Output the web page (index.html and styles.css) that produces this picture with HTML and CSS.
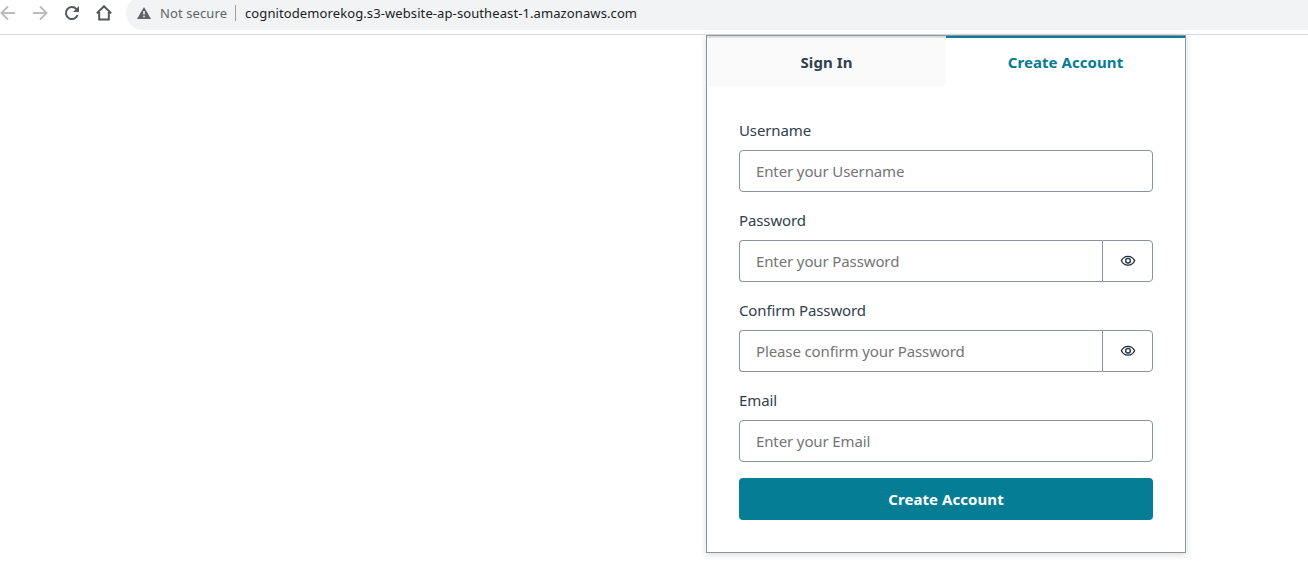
FILE: index.html
```
<!DOCTYPE html>
<html lang="en">
<head>
<meta charset="utf-8">
<title>Create Account</title>
<link rel="stylesheet" href="styles.css">
</head>
<body>
<header class="toolbar">
  <nav class="nav">
    <svg class="icon faded" viewBox="0 0 16 16"><path d="M15 8H2M8 1.5L1.5 8L8 14.5"/></svg>
    <svg class="icon faded" viewBox="0 0 16 16"><path d="M1 8h13M8 1.5L14.5 8L8 14.5"/></svg>
    <svg class="icon" viewBox="0 0 16 16"><path d="M13.6 10A6 6 0 1 1 12.3 3.9L13.5 5"/><path class="solid" d="M15 1v6H9z"/></svg>
    <svg class="icon" viewBox="0 0 16 16"><path d="M0.8 8.4L8 1.2L15.2 8.4M3.2 7V14.6H12.8V7"/></svg>
  </nav>
  <div class="address">
    <svg class="warning" viewBox="0 0 14 12"><path d="M7 0L14 12H0z" fill="#5f6368"/><path d="M6.2 4h1.6v3.6H6.2zM6.2 8.7h1.6v1.6H6.2z" fill="#f1f3f4"/></svg>
    <span class="status">Not secure</span>
    <span class="divider"></span>
    <span class="url">cognitodemorekog.s3-website-ap-southeast-1.amazonaws.com</span>
  </div>
</header>
<main class="card">
  <div class="tabs">
    <button class="tab">Sign In</button>
    <button class="tab active">Create Account</button>
  </div>
  <form class="form">
    <div class="field">
      <label class="label" for="username">Username</label>
      <div class="control"><input class="input" id="username" placeholder="Enter your Username"></div>
    </div>
    <div class="field">
      <label class="label" for="password">Password</label>
      <div class="control">
        <input class="input" id="password" type="password" placeholder="Enter your Password">
        <button class="reveal" type="button" aria-label="Show password"><svg class="eye" viewBox="0 0 24 24"><path d="M12 6a9.77 9.77 0 0 1 8.82 5.5 9.76 9.76 0 0 1-17.64 0A9.77 9.77 0 0 1 12 6m0-2C7 4 2.73 7.11 1 11.5 2.73 15.89 7 19 12 19s9.27-3.11 11-7.5C21.27 7.11 17 4 12 4m0 5a2.5 2.5 0 0 1 0 5 2.5 2.5 0 0 1 0-5m0-2a4.5 4.5 0 1 0 0 9 4.5 4.5 0 0 0 0-9"/></svg></button>
      </div>
    </div>
    <div class="field">
      <label class="label" for="confirm">Confirm Password</label>
      <div class="control">
        <input class="input" id="confirm" type="password" placeholder="Please confirm your Password">
        <button class="reveal" type="button" aria-label="Show password"><svg class="eye" viewBox="0 0 24 24"><path d="M12 6a9.77 9.77 0 0 1 8.82 5.5 9.76 9.76 0 0 1-17.64 0A9.77 9.77 0 0 1 12 6m0-2C7 4 2.73 7.11 1 11.5 2.73 15.89 7 19 12 19s9.27-3.11 11-7.5C21.27 7.11 17 4 12 4m0 5a2.5 2.5 0 0 1 0 5 2.5 2.5 0 0 1 0-5m0-2a4.5 4.5 0 1 0 0 9 4.5 4.5 0 0 0 0-9"/></svg></button>
      </div>
    </div>
    <div class="field">
      <label class="label" for="email">Email</label>
      <div class="control"><input class="input" id="email" type="email" placeholder="Enter your Email"></div>
    </div>
    <button class="submit" type="button">Create Account</button>
  </form>
</main>
</body>
</html>
```
FILE: styles.css
```
* { box-sizing: border-box; }
body {
  margin: 0;
  height: 571px;
  overflow: hidden;
  background: #fff;
  color: #304050;
  font-family: "Noto Sans", "Open Sans", sans-serif;
  font-size: 15px;
  letter-spacing: -0.12px;
}
button, input { font: inherit; letter-spacing: inherit; margin: 0; }
.toolbar {
  display: flex;
  align-items: flex-start;
  height: 35px;
  border-bottom: 1px solid #dadce0;
}
.nav { display: flex; gap: 16px; width: 126px; padding-top: 5px; }
.icon { width: 16px; height: 16px; flex: none; fill: none; stroke: #54585d; stroke-width: 2; }
.icon .solid { fill: #54585d; stroke: none; }
.icon.faded { stroke: #babcbe; }
.address {
  flex: 1;
  display: flex;
  align-items: center;
  height: 34px;
  margin-top: -4px;
  padding-left: 11px;
  background: #f1f3f4;
  border-radius: 17px 0 0 17px;
  font-size: 13px;
  letter-spacing: 0.1px;
}
.warning { width: 14px; height: 12px; }
.status { width: 84px; padding-left: 9px; color: #5f6368; white-space: nowrap; }
.divider { width: 1px; height: 16px; background: #9aa0a6; margin-right: 9px; }
.url { color: #202124; white-space: nowrap; }
.card {
  width: 480px;
  height: 518px;
  margin-left: 706px;
  border: 1px solid #89949f;
  background: #fff;
  box-shadow: 0 2px 6px rgba(13, 26, 38, 0.15);
}
.tabs { display: grid; grid-template-columns: 1fr 1fr; height: 50px; }
.tab {
  padding: 0 0 1px;
  border: 0;
  border-top: 2px solid #dcdee0;
  background: #fafafa;
  color: #304050;
  font-weight: 700;
  letter-spacing: 0.07px;
}
.tab.active { border-color: #047d95; background: #fff; color: #047d95; }
.form { padding: 32px; display: flex; flex-direction: column; gap: 16px; }
.field { display: flex; flex-direction: column; gap: 8px; }
.label { height: 24px; line-height: 24px; }
.control { display: flex; height: 42px; }
.input {
  flex: 1;
  min-width: 0;
  padding: 0 16px;
  border: 1px solid #89949f;
  border-radius: 4px;
  background: #fff;
  outline: 0;
}
.input::placeholder { color: #757575; opacity: 1; }
.input:not(:last-child) { border-right: 0; border-radius: 4px 0 0 4px; }
.reveal {
  display: flex;
  align-items: center;
  justify-content: center;
  width: 51px;
  padding: 0;
  border: 1px solid #89949f;
  border-radius: 0 4px 4px 0;
  background: #fff;
}
.eye { width: 16px; height: 16px; fill: #1c2c3b; }
.submit {
  height: 42px;
  padding: 0;
  border: 0;
  border-radius: 4px;
  background: #047d95;
  color: #fff;
  font-weight: 700;
  letter-spacing: 0.07px;
}
```
